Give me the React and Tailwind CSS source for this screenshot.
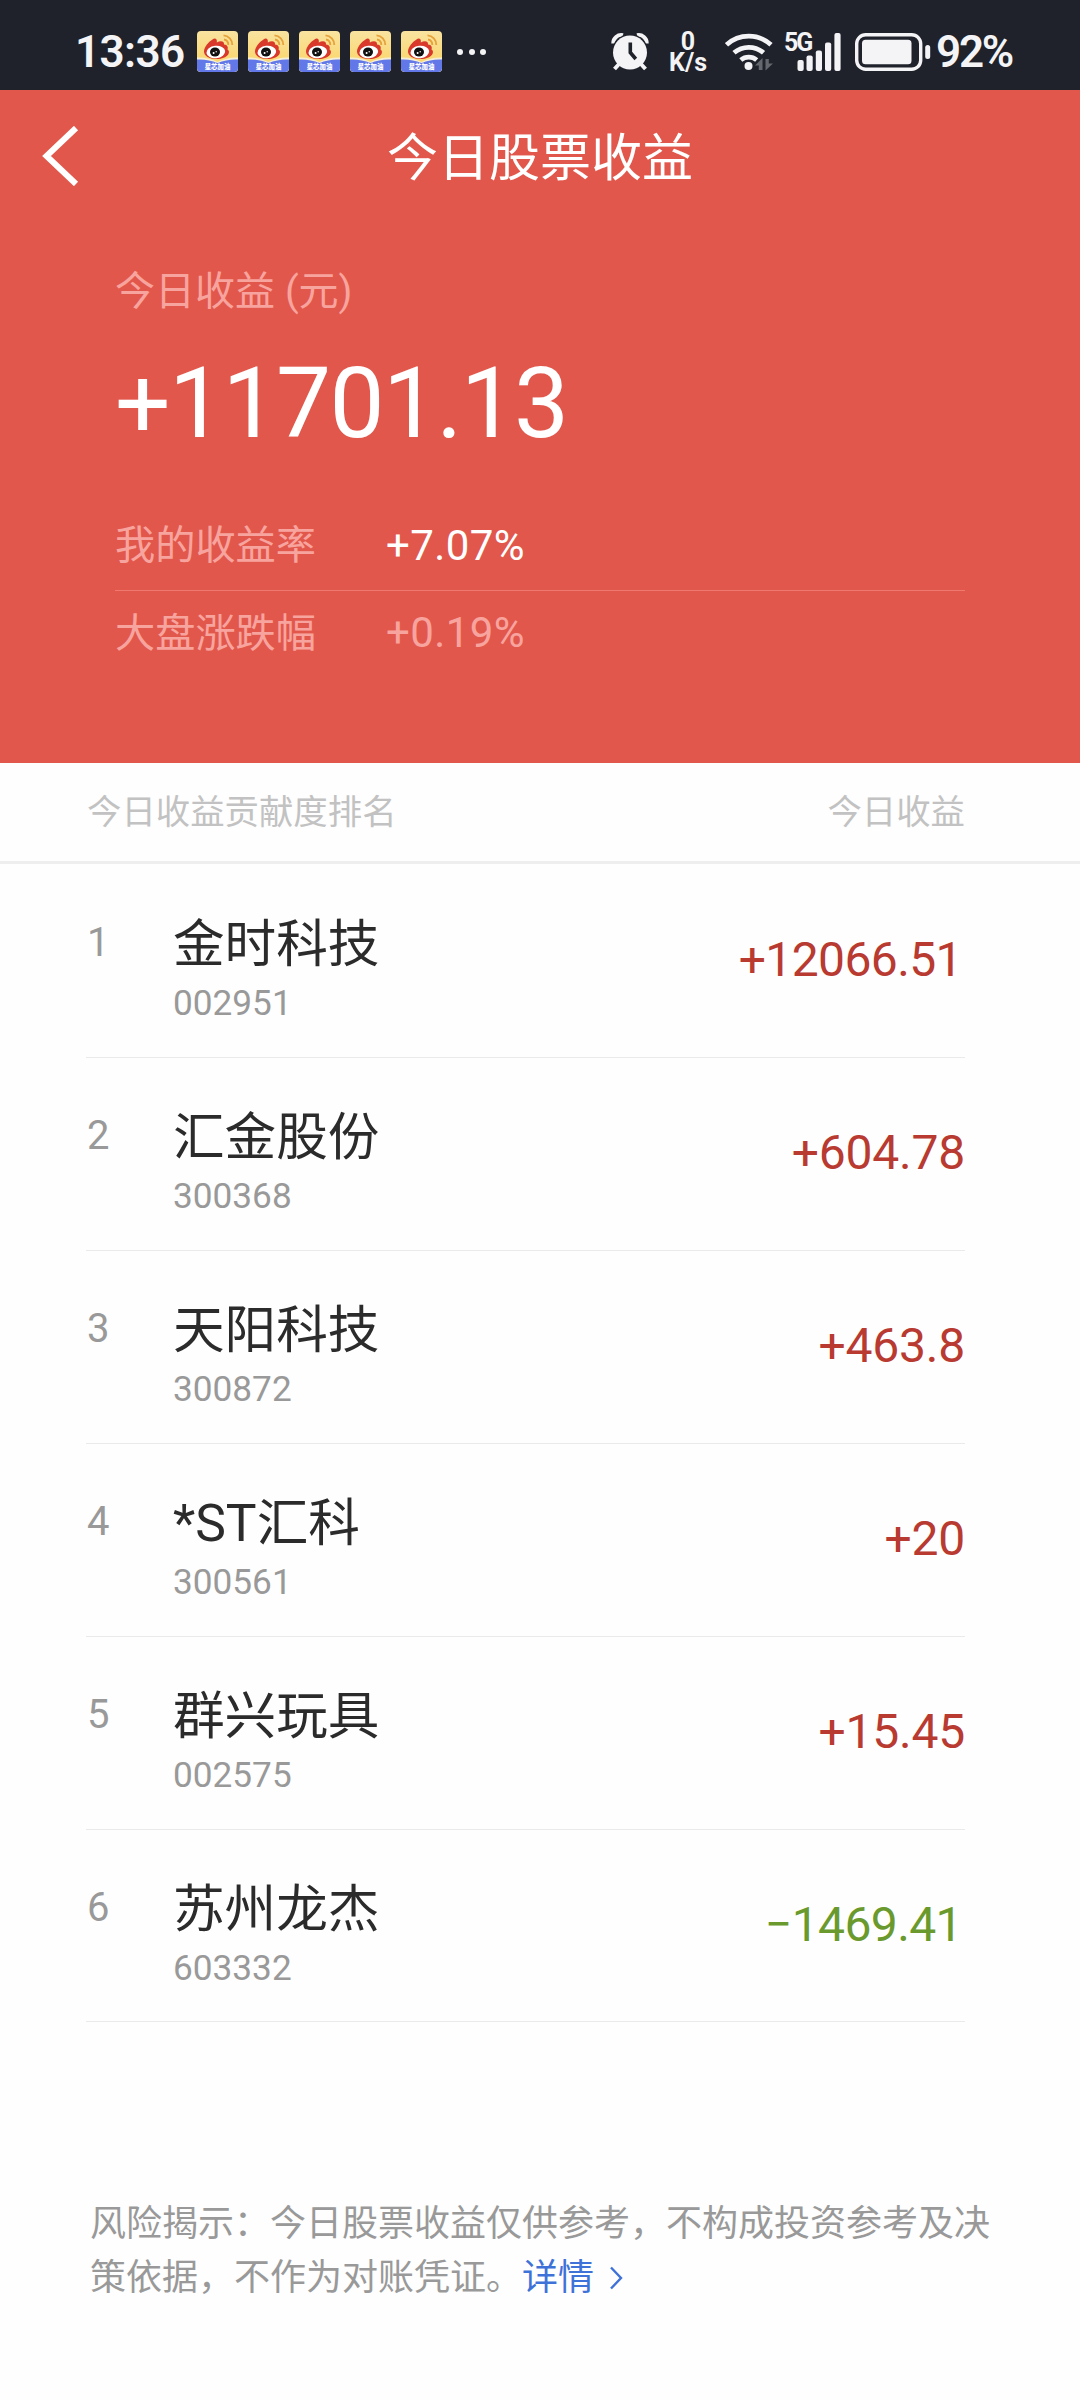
import React from "react";

const stocks = [
  { name: "金时科技", code: "002951", profit: "+12066.51" },
  { name: "汇金股份", code: "300368", profit: "+604.78" },
  { name: "天阳科技", code: "300872", profit: "+463.8" },
  { name: "*ST汇科", code: "300561", profit: "+20" },
  { name: "群兴玩具", code: "002575", profit: "+15.45" },
  { name: "苏州龙杰", code: "603332", profit: "−1469.41" },
];

function WeiboIcon() {
  return (
    <svg width="41" height="41" viewBox="0 0 41 41">
      <defs>
        <linearGradient id="weiboBg" x1="0" y1="0" x2="0" y2="1">
          <stop offset="0" stopColor="#f9e3a0" />
          <stop offset="1" stopColor="#fbd35f" />
        </linearGradient>
        <clipPath id="weiboClip">
          <rect width="41" height="41" rx="4" />
        </clipPath>
      </defs>
      <g clipPath="url(#weiboClip)">
        <rect width="41" height="41" fill="url(#weiboBg)" />
        <path d="M0 26.5 Q11 26 20.5 31 Q30 26 41 26.5 V41 H0Z" fill="#f6efd8" />
        <path d="M0 28.5 Q11 28 20.5 32 Q30 28 41 28.5 V41 H0Z" fill="#6277e8" />
        <path
          d="M7 20.5C7 16 12 10.5 15.5 8.5C18 6.5 20.5 8 19.8 11.5C23 9.5 27.5 9.5 27 13.5C31.5 14 31 17 30.5 18.5C34 20.5 31.5 28 19.5 28C12 28 7 25 7 20.5Z"
          fill="#d8392b"
        />
        <ellipse cx="18.8" cy="21" rx="9.4" ry="6.2" fill="#fff" transform="rotate(-6 18.8 21)" />
        <ellipse cx="18" cy="21" rx="5" ry="4.5" fill="#111" />
        <circle cx="16.6" cy="22" r="1" fill="#fff" />
        <circle cx="19.2" cy="20.8" r="0.7" fill="#fff" />
        <path d="M27 8.5A5.5 5.5 0 0 1 31.3 14" fill="none" stroke="#e5a23c" strokeWidth="1.8" />
        <path d="M26.5 4.3A9.5 9.5 0 0 1 35.3 14" fill="none" stroke="#e5a23c" strokeWidth="1.8" />
        <text
          x="20.5"
          y="38.3"
          textAnchor="middle"
          fontSize="6.4"
          fontWeight="900"
          fill="#fff"
          fontFamily="Noto Sans CJK SC, sans-serif"
        >
          星芯加油
        </text>
      </g>
    </svg>
  );
}

function AlarmIcon() {
  return (
    <svg width="38" height="40" viewBox="0 0 38 40" fill="none">
      <path d="M2.3 11.5A8 8 0 0 1 12 3.3" stroke="#f4f4f6" strokeWidth="4" />
      <path d="M35.7 11.5A8 8 0 0 0 26 3.3" stroke="#f4f4f6" strokeWidth="4" />
      <circle cx="19" cy="20.5" r="18.5" fill="#1f222b" />
      <path d="M9 31L3.5 37M29 31L34.5 37" stroke="#f4f4f6" strokeWidth="4" />
      <circle cx="19" cy="20.5" r="17" fill="#f4f4f6" />
      <path d="M19.3 10.5V20.5L24.8 27" stroke="#1f222b" strokeWidth="3.6" />
    </svg>
  );
}

function WifiIcon() {
  return (
    <svg width="49" height="40" viewBox="0 0 49 40" fill="none">
      <g stroke="#f4f4f6" strokeWidth="4.8">
        <path d="M1.5 12.8A33 33 0 0 1 46 12.8" />
        <path d="M9 20.8A22.5 22.5 0 0 1 38.5 20.8" />
        <path d="M15.8 28A12.5 12.5 0 0 1 31.7 28" />
      </g>
      <circle cx="23.5" cy="34" r="4" fill="#f4f4f6" />
      <path d="M30 33.5L37.5 26V38H33.8V33.5Z" fill="#65676e" />
      <path d="M48 31.5L40.5 38.5V27H43.8V31.5Z" fill="#65676e" />
    </svg>
  );
}

function SignalIcon() {
  return (
    <svg width="45" height="38" viewBox="0 0 45 38" fill="#f4f4f6">
      <rect x="0.5" y="27" width="6.2" height="11" rx="2" />
      <rect x="9.5" y="22.5" width="6.2" height="15.5" rx="2" />
      <rect x="18.8" y="17.5" width="6.2" height="20.5" rx="2" />
      <rect x="28" y="9.5" width="6.2" height="28.5" rx="2" />
      <rect x="37.4" y="0" width="6.2" height="38" rx="2" />
    </svg>
  );
}

function BatteryIcon() {
  return (
    <svg width="76" height="38" viewBox="0 0 76 38" fill="none">
      <rect x="1.7" y="1.7" width="64" height="34.6" rx="9" stroke="#f4f4f6" strokeWidth="3.4" />
      <rect x="7" y="6.7" width="49.5" height="24.6" rx="3.5" fill="#f4f4f6" />
      <rect x="70.2" y="12" width="5" height="14" rx="2.5" fill="#f4f4f6" />
    </svg>
  );
}

function StatusBar() {
  return (
    <div className="flex h-[90px] items-center bg-[#1f222b] pt-[13px] pl-[75px] text-[#f4f4f6]">
      <span className="w-[122px] text-[44px] leading-none font-semibold tracking-[-0.6px]">13:36</span>
      <div className="flex gap-[10px]">
        {[0, 1, 2, 3, 4].map((i) => (
          <WeiboIcon key={i} />
        ))}
      </div>
      <div className="ml-[15px] flex w-[29px] justify-between">
        {[0, 1, 2].map((i) => (
          <span key={i} className="size-[6px] rounded-full bg-[#f4f4f6]" />
        ))}
      </div>
      <div className="ml-[125px]">
        <AlarmIcon />
      </div>
      <div className="ml-[18px] flex w-[42px] flex-col items-center text-[25px] leading-[21px] font-bold">
        <span>0</span>
        <span>K/s</span>
      </div>
      <div className="ml-[16px]">
        <WifiIcon />
      </div>
      <div className="ml-[10px] flex h-[38px] w-[58px]">
        <span className="w-[13px] text-[25px] leading-[20px] font-bold tracking-[-2px]">5G</span>
        <SignalIcon />
      </div>
      <div className="ml-[13px]">
        <BatteryIcon />
      </div>
      <span className="ml-[5px] text-[44px] leading-none font-semibold tracking-[-2.2px]">92%</span>
    </div>
  );
}

function Summary() {
  return (
    <div className="h-[673px] bg-[#e2574c] text-white">
      <div className="flex h-[132px] items-center pl-[42px]">
        <svg width="37" height="60" viewBox="0 0 37 60" fill="none">
          <path d="M34 2L4.5 30L34 58" stroke="#fff" strokeWidth="6" />
        </svg>
        <h1 className="w-[922px] pt-[4px] text-center text-[51px] leading-none">今日股票收益</h1>
      </div>
      <div className="px-[115px]">
        <p className="mt-[48px] text-[40px] leading-[44px] text-[#f8a49e]">今日收益 (元)</p>
        <p className="mt-[40px] text-[98px] leading-[100px] tracking-[-1.6px]">+11701.13</p>
        <div className="mt-[38px] flex h-[99px] items-center border-b border-[#ef786f] pt-[11px]">
          <span className="w-[271px] text-[40.2px] text-[#f8a49e]">我的收益率</span>
          <span className="pb-[3px] text-[42px] tracking-[0.4px]">+7.07%</span>
        </div>
        <div className="flex h-[84px] items-center text-[#f8a49e]">
          <span className="w-[271px] pt-[2px] text-[40.2px]">大盘涨跌幅</span>
          <span className="pb-[2px] text-[42px] tracking-[0.4px]">+0.19%</span>
        </div>
      </div>
    </div>
  );
}

function StockRow({ rank, stock }) {
  const isLoss = stock.profit.startsWith("−");

  return (
    <div className="mr-[115px] ml-[86px] flex h-[193px] border-b border-[#eaeaea] last:h-[192px]">
      <span className="mt-[56px] w-[87px] pl-px text-[40px] leading-[44px] text-[#999999]">{rank}</span>
      <div className="mt-[50px] flex-1">
        <p className="text-[51.6px] leading-[60px] text-[#2b2b2b]">{stock.name}</p>
        <p className="mt-[8px] text-[35.2px] leading-[40px] text-[#999999]">{stock.code}</p>
      </div>
      <span
        className={`mt-[67px] text-[48px] leading-[56px] ${
          stock.profit.endsWith("1") ? "pr-[3px] tracking-[-0.6px]" : "tracking-[-0.2px]"
        } ${isLoss ? "text-[#6a9a2d]" : "text-[#b83a31]"}`}
      >
        {stock.profit}
      </span>
    </div>
  );
}

export default function App() {
  return (
    <div className="h-[2400px] w-[1080px] overflow-hidden bg-[#fefefe] font-['Roboto','Noto_Sans_CJK_SC',sans-serif]">
      <StatusBar />
      <Summary />

      <div className="flex h-[101px] items-center justify-between border-b-3 border-[#eeeeee] pt-[2px] pr-[115px] pl-[87px] text-[34.4px] text-[#c2c2c2]">
        <span>今日收益贡献度排名</span>
        <span>今日收益</span>
      </div>

      <div className="pt-px">
        {stocks.map((stock, i) => (
          <StockRow key={stock.code} rank={i + 1} stock={stock} />
        ))}
      </div>

      {/* Risk notice */}
      <div className="mt-[175px] pl-[90px] text-[36px] leading-[54px] text-[#999999]">
        <p>风险揭示：今日股票收益仅供参考，不构成投资参考及决</p>
        <p className="flex items-center">
          策依据，不作为对账凭证。
          <span className="text-[#3f72d8]">详情</span>
          <svg className="ml-[15px]" width="15" height="24" viewBox="0 0 15 24" fill="none">
            <path d="M2 1.5L12 12L2 22.5" stroke="#3f72d8" strokeWidth="2.4" />
          </svg>
        </p>
      </div>
    </div>
  );
}
